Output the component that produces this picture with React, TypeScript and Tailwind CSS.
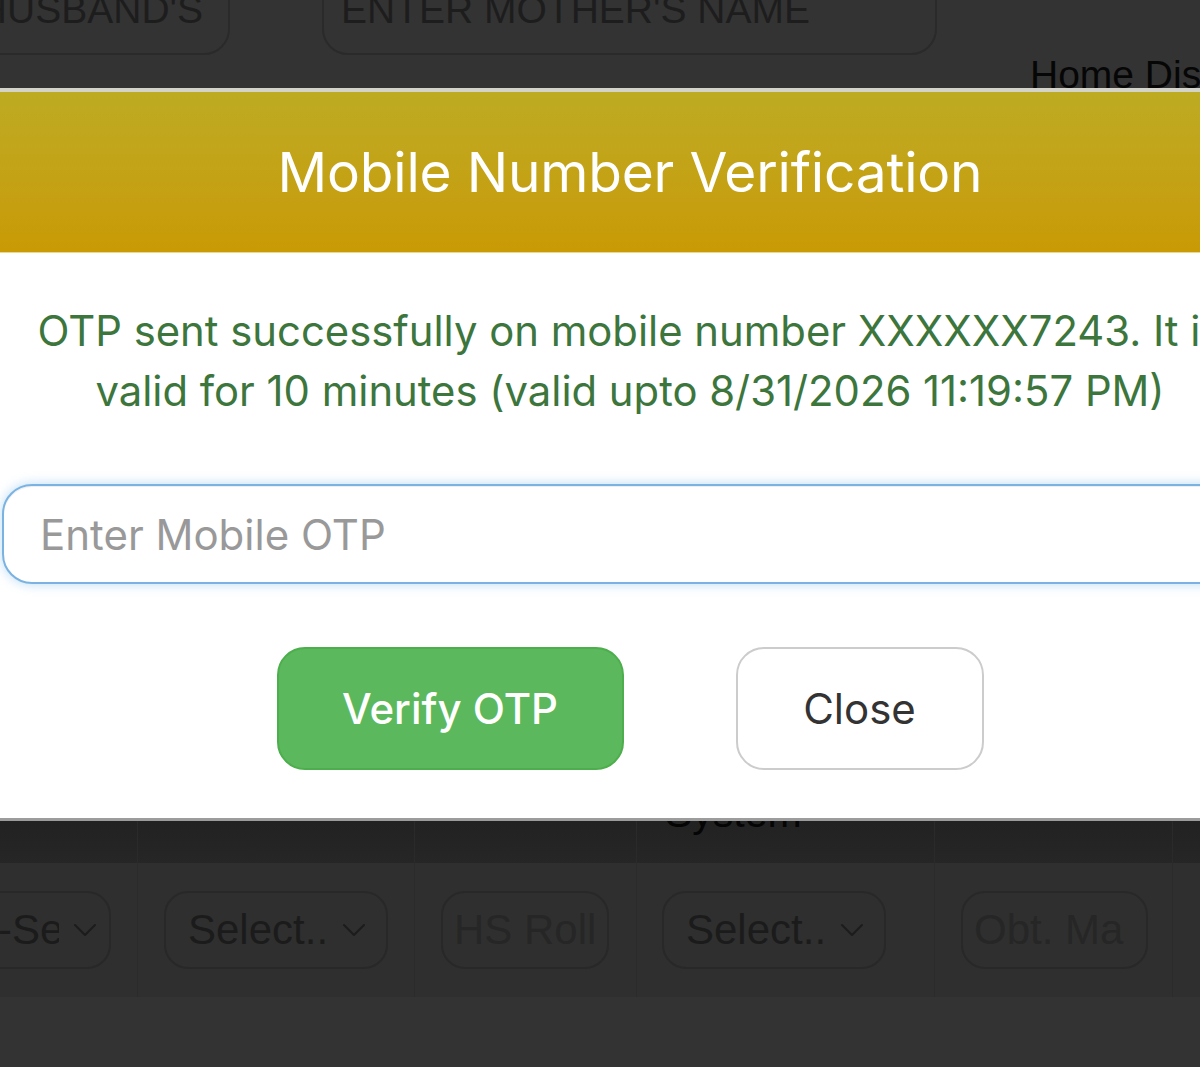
import React from "react";

function Chevron() {
    return (
        <svg width="24" height="14" viewBox="0 0 24 14" fill="none" className="shrink-0">
            <polyline points="2,2 12,12 22,2" stroke="#1c1c1c" strokeWidth="2" strokeLinecap="round" strokeLinejoin="round" />
        </svg>
    );
}

function SelectBox({ text, width, clip }: { text: string; width: string; clip?: string }) {
    return (
        <div className={`${width} h-[78px] rounded-[24px] border-2 border-[#282828] flex items-center pl-[22px] pr-[12px] gap-[14px]`}>
            <span className={`${clip ?? ""} overflow-hidden whitespace-nowrap text-[42px] leading-none text-[#1b1b1b]`}>{text}</span>
            <Chevron />
        </div>
    );
}

function BackgroundForm() {
    return (
        <div className="flex flex-col">
            {/* name inputs row, scrolled mostly out of view */}
            <div className="flex items-start -mt-[45px] h-[100px]">
                <div className="-ml-[60px] w-[290px] h-[100px] shrink-0 rounded-[26px] border-2 border-[#2a2a2a] flex items-center justify-end pr-[25px] pt-[8px] overflow-hidden">
                    <span className="text-[39px] leading-none text-[#1d1d1d] whitespace-nowrap">HUSBAND'S</span>
                </div>
                <div className="ml-[92px] w-[615px] h-[100px] shrink-0 rounded-[26px] border-2 border-[#2a2a2a] flex items-center pl-[17px] pt-[8px]">
                    <span className="text-[39px] leading-none text-[#1d1d1d] whitespace-nowrap">ENTER MOTHER'S NAME</span>
                </div>
            </div>
            <div className="ml-[1030px] text-[39px] leading-none text-[#060606] whitespace-nowrap">Home District</div>

            {/* qualification table */}
            <div className="mt-[686px] -ml-[62px] grid grid-cols-[200px_277px_222px_298px_238px_100px]">
                <div className="h-[83px] bg-linear-to-b from-[#1e1e1e] to-[#262626] border-r border-[#2a2a2a]" />
                <div className="h-[83px] bg-linear-to-b from-[#1e1e1e] to-[#262626] border-r border-[#2a2a2a]" />
                <div className="h-[83px] bg-linear-to-b from-[#1e1e1e] to-[#262626] border-r border-[#2a2a2a]" />
                <div className="h-[83px] bg-linear-to-b from-[#1e1e1e] to-[#262626] border-r border-[#2a2a2a] pt-[13px] pl-[28px]">
                    <span className="text-[41px] leading-none text-[#050505]">System</span>
                </div>
                <div className="h-[83px] bg-linear-to-b from-[#1e1e1e] to-[#262626] border-r border-[#2a2a2a]" />
                <div className="h-[83px] bg-linear-to-b from-[#1e1e1e] to-[#262626]" />

                <div className="h-[134px] bg-[#2f2f2f] border-r border-[#2b2b2b] flex items-center pl-[22px]">
                    <SelectBox text="--Select--" width="w-[151px]" clip="w-[75px]" />
                </div>
                <div className="h-[134px] bg-[#2f2f2f] border-r border-[#2b2b2b] flex items-center pl-[26px]">
                    <SelectBox text="Select.." width="w-[224px]" />
                </div>
                <div className="h-[134px] bg-[#2f2f2f] border-r border-[#2b2b2b] flex items-center pl-[26px]">
                    <div className="w-[168px] h-[78px] rounded-[24px] border-2 border-[#282828] flex items-center pl-[11px] overflow-hidden">
                        <span className="text-[42px] leading-none text-[#262626] whitespace-nowrap">HS Roll No</span>
                    </div>
                </div>
                <div className="h-[134px] bg-[#2f2f2f] border-r border-[#2b2b2b] flex items-center pl-[25px]">
                    <SelectBox text="Select.." width="w-[224px]" />
                </div>
                <div className="h-[134px] bg-[#2f2f2f] border-r border-[#2b2b2b] flex items-center pl-[26px]">
                    <div className="w-[187px] h-[78px] rounded-[24px] border-2 border-[#282828] flex items-center pl-[11px] overflow-hidden">
                        <span className="w-[152px] overflow-hidden text-[42px] leading-none text-[#262626] whitespace-nowrap">Obt. Marks</span>
                    </div>
                </div>
                <div className="h-[134px] bg-[#2f2f2f]" />
            </div>
        </div>
    );
}

function OtpModal() {
    return (
        <div className="absolute top-[88px] -left-[10px] w-[1280px] border-t-4 border-[#d4d3c9] border-b-[3px] border-b-[#9c9c9c] font-['Inter','Noto_Sans',sans-serif]">
            <div className="h-[161px] bg-linear-to-b from-[#bdab22] to-[#c99a04] border-b border-[#e9d98a] flex items-center justify-center">
                <h4 className="text-[55px] leading-none text-white tracking-[-0.2px]">Mobile Number Verification</h4>
            </div>
            <div className="bg-white pt-[48px] pb-[48px] px-[12px] flex flex-col items-center">
                <p className="text-[41.8px] leading-[60px] text-[#3c763d] text-center whitespace-nowrap">
                    OTP sent successfully on mobile number XXXXXX7243. It is
                    <br />
                    valid for 10 minutes (valid upto 8/31/2026 11:19:57 PM)
                </p>
                <input
                    type="text"
                    placeholder="Enter Mobile OTP"
                    className="mt-[63px] w-full h-[100px] rounded-[30px] border-2 border-[#7ab3e2] bg-white px-[36px] text-[42px] text-[#555] placeholder:text-[#999] outline-none shadow-[inset_0_1px_1px_rgba(0,0,0,0.075),0_0_12px_rgba(102,175,233,0.45)]"
                />
                <div className="mt-[63px] flex items-center gap-[112px]">
                    <button className="w-[347px] h-[123px] rounded-[28px] bg-[#5cb85c] border-2 border-[#4cae4c] text-white text-[42px] font-medium">
                        Verify OTP
                    </button>
                    <button className="w-[248px] h-[123px] rounded-[28px] bg-white border-2 border-[#cccccc] text-[#333] text-[42px]">
                        Close
                    </button>
                </div>
            </div>
        </div>
    );
}

export default function App() {
    return (
        <div className="relative w-[1200px] h-[1067px] overflow-hidden bg-[#333333] font-['Liberation_Sans',Arial,sans-serif]">
            <BackgroundForm />
            <OtpModal />
        </div>
    );
}
